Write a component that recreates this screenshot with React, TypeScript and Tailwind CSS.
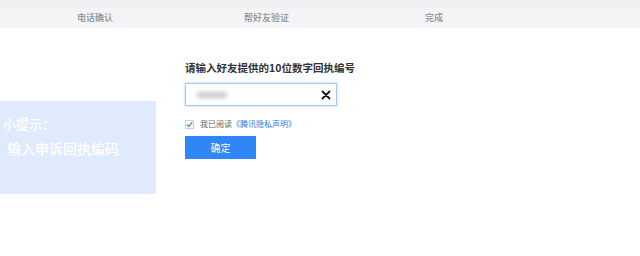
import React from 'react';

const font = { fontFamily: '"Noto Sans CJK SC", "Liberation Sans", sans-serif' };

export default function App() {
  return (
    <div className="w-[640px] h-[256px] bg-white overflow-hidden relative" style={font}>
      {/* Steps bar */}
      <div className="h-[7px] bg-[#efeef1]" />
      <div className="h-[21px] bg-[#f4f4f6] flex items-center text-[9px] font-medium text-[#8e8e92]">
        <span className="ml-[77px]">电话确认</span>
        <span className="ml-[131px]">帮好友验证</span>
        <span className="ml-[136px]">完成</span>
      </div>

      <div className="flex">
        {/* Tip panel */}
        <div className="w-[156px] h-[93px] mt-[73px] bg-[#dfeafd] text-white text-[13px] font-medium">
          <div className="pl-[3px] pt-[14px] leading-[18px]">小提示：</div>
          <div className="pl-[7px] pt-[6px] leading-[18px] text-[14px]">输入申诉回执编码</div>
        </div>

        {/* Form */}
        <div className="ml-[29px] mt-[32px] flex flex-col">
          <div className="text-[10.5px] font-bold text-[#333] leading-[15px]">请输入好友提供的10位数字回执编号</div>
          <div className="mt-[8px] w-[152px] h-[23px] border border-[#a9c8ef] shadow-[0_0_3px_rgba(120,170,235,0.5)] flex items-center justify-between pl-[11px] pr-[5px]">
            <div className="w-[30px] h-[6px] rounded-full bg-[#c9c9c9] blur-[2px]" />
            <svg width="10" height="10" viewBox="0 0 10 10">
              <path d="M1.5 1.5 L8.5 8.5 M8.5 1.5 L1.5 8.5" stroke="#111" strokeWidth="1.8" strokeLinecap="round" />
            </svg>
          </div>
          <div className="mt-[13px] flex items-center text-[8px] leading-[10px]">
            <div className="w-[9px] h-[9px] border border-[#cfcfcf] flex items-center justify-center">
              <svg width="7" height="7" viewBox="0 0 7 7">
                <path d="M0.8 3.6 L2.7 5.5 L6.3 1.2" stroke="#4f9d4f" strokeWidth="1.2" fill="none" />
              </svg>
            </div>
            <span className="ml-[6px] text-[#666]">我已阅读</span>
            <span className="text-[#2f7fe0]">《腾讯隐私声明》</span>
          </div>
          <button className="mt-[7px] w-[71px] h-[23px] bg-[#2f86f6] text-white text-[10px] flex items-center justify-center">确定</button>
        </div>
      </div>
    </div>
  );
}
